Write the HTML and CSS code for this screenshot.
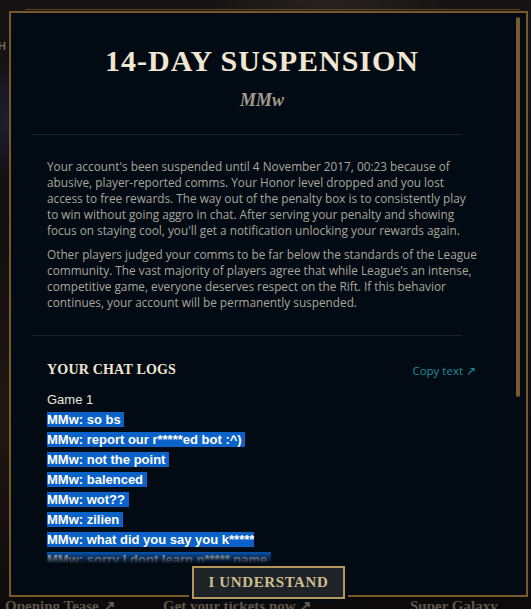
FILE: index.html
```html
<!DOCTYPE html>
<html lang="en">
<head>
<meta charset="utf-8">
<title>14-Day Suspension</title>
<link rel="stylesheet" href="styles.css">
</head>
<body>
  <div class="client">
    <div class="client-top">
      <span class="client-tab">H</span>
    </div>
    <nav class="client-links">
      <a class="client-link">Opening Tease ↗</a>
      <a class="client-link">Get your tickets now ↗</a>
      <a class="client-link">Super Galaxy</a>
    </nav>
  </div>

  <div class="modal" role="dialog" aria-labelledby="modal-title">
    <div class="modal-body">
      <header class="modal-header">
        <h1 id="modal-title" class="modal-title">14-DAY SUSPENSION</h1>
        <p class="modal-name">MMw</p>
      </header>

      <hr class="divider">

      <section class="notice">
        <p>Your account's been suspended until 4 November 2017, 00:23 because of abusive, player-reported comms. Your Honor level dropped and you lost access to free rewards. The way out of the penalty box is to consistently play to win without going aggro in chat. After serving your penalty and showing focus on staying cool, you'll get a notification unlocking your rewards again.</p>
        <p>Other players judged your comms to be far below the standards of the League community. The vast majority of players agree that while League’s an intense, competitive game, everyone deserves respect on the Rift. If this behavior continues, your account will be permanently suspended.</p>
      </section>

      <hr class="divider">

      <section class="chat">
        <div class="chat-head">
          <h2 class="chat-title">YOUR CHAT LOGS</h2>
          <a class="copy-link">Copy text ↗</a>
        </div>
        <div class="chat-game">Game 1</div>
        <ul class="chat-log">
          <li><span class="chat-line">MMw: so bs </span></li>
          <li><span class="chat-line">MMw: report our r*****ed bot :^) </span></li>
          <li><span class="chat-line">MMw: not the point </span></li>
          <li><span class="chat-line">MMw: balenced </span></li>
          <li><span class="chat-line">MMw: wot?? </span></li>
          <li><span class="chat-line">MMw: zilien </span></li>
          <li><span class="chat-line">MMw: what did you say you k*****</span></li>
          <li><span class="chat-line">MMw: sorry I dont learn n***** name </span></li>
        </ul>
      </section>
    </div>

    <div class="scrollbar"><div class="scrollbar-thumb"></div></div>

    <footer class="modal-actions">
      <button class="btn-primary" type="button">I UNDERSTAND</button>
    </footer>
  </div>
</body>
</html>
```

FILE: styles.css
```css
* {
  box-sizing: border-box;
}

html,
body {
  margin: 0;
  height: 100%;
}

body {
  width: 531px;
  height: 609px;
  overflow: hidden;
  position: relative;
  background: #0e0c0d;
  font-family: "Liberation Sans", Arial, sans-serif;
}

/* client shell behind the dialog */
.client {
  height: 100%;
  display: flex;
  flex-direction: column;
  justify-content: space-between;
  background:
    radial-gradient(ellipse 90px 60px at 20px 120px, rgba(40, 50, 90, 0.45), transparent),
    radial-gradient(ellipse 120px 40px at 330px 0px, rgba(70, 64, 58, 0.35), transparent),
    radial-gradient(ellipse 80px 200px at 0px 420px, rgba(60, 44, 30, 0.35), transparent),
    linear-gradient(#171314, #0c0a0b);
}

.client-top {
  padding: 36px 0 0 0;
  height: 60px;
}

.client-tab {
  display: inline-block;
  font-family: "Liberation Sans", sans-serif;
  font-weight: bold;
  font-size: 11px;
  color: #6f6a63;
  margin-left: -2px;
}

.client-links {
  display: flex;
  height: 12px;
  font-family: "Liberation Serif", serif;
  font-weight: bold;
  font-size: 15px;
  line-height: 18px;
  color: #5f584d;
  white-space: nowrap;
}

.client-link:nth-child(1) { margin-left: 5px; width: 158px; }
.client-link:nth-child(2) { width: 247px; }

/* dialog frame */
.modal {
  position: absolute;
  left: 9px;
  top: 11px;
  width: 519px;
  height: 586px;
  border: 2px solid #785a28;
  background: #020a13;
}

.modal::before {
  content: "";
  position: absolute;
  left: 14px;
  right: 6px;
  top: -4px;
  height: 1px;
  background: #5b4522;
}

.modal-body {
  height: 552px;
  overflow: hidden;
  padding: 30px 49px 0 36px;
  position: relative;
}

.modal-body::after {
  content: "";
  position: absolute;
  left: 0;
  right: 0;
  bottom: 0;
  height: 14px;
  background: linear-gradient(rgba(2, 10, 19, 0.1), #020a13 90%);
}

.modal-header {
  text-align: center;
}

.modal-title {
  margin: 0;
  font-family: "Liberation Serif", serif;
  font-weight: bold;
  font-size: 30px;
  line-height: 36px;
  letter-spacing: 1px;
  color: #f0e6d2;
}

.modal-name {
  margin: 9px 0 0;
  font-family: "Liberation Serif", serif;
  font-style: italic;
  font-weight: bold;
  font-size: 18px;
  line-height: 24px;
  color: #a09b8c;
}

.divider {
  border: 0;
  height: 1px;
  background: #1b2329;
  margin: 22px 15px 0 -15px;
}

.notice {
  padding-top: 23px;
  padding-bottom: 25px;
}

.notice p {
  margin: 0;
  font-family: "Open Sans", sans-serif;
  font-size: 11.8px;
  line-height: 16px;
  color: #aaa69b;
}

.notice p + p {
  margin-top: 8px;
}

.notice + .divider {
  margin-top: 0;
}

.chat {
  padding-top: 24px;
}

.chat-head {
  display: flex;
  justify-content: space-between;
  align-items: center;
  height: 20px;
}

.chat-title {
  margin: 0;
  font-family: "Liberation Serif", serif;
  font-weight: bold;
  font-size: 14px;
  letter-spacing: 0.2px;
  color: #f0e6d2;
}

.copy-link {
  font-family: "Open Sans", sans-serif;
  font-size: 11.5px;
  color: #17919c;
  margin-right: 1px;
}

.chat-game {
  margin-top: 10px;
  font-size: 13px;
  line-height: 20px;
  color: #eae6df;
}

.chat-log {
  list-style: none;
  margin: 0;
  padding: 0;
}

.chat-log li {
  font-size: 13px;
  font-weight: bold;
  line-height: 20px;
  white-space: pre;
}

.chat-line {
  background: #0b62c9;
  color: #ffffff;
}

/* custom scroll track */
.scrollbar {
  position: absolute;
  top: 4px;
  right: 6px;
  width: 4px;
  height: 380px;
}

.scrollbar-thumb {
  height: 100%;
  border-radius: 2px;
  background: #7a5c2c;
}

.modal-actions {
  position: absolute;
  left: 0;
  right: 0;
  bottom: -4px;
  display: flex;
  justify-content: center;
}

.btn-primary {
  width: 153px;
  height: 33px;
  border: 2px solid #b5975d;
  background: #1e2328;
  color: #cdbe91;
  font-family: "Liberation Serif", serif;
  font-weight: bold;
  font-size: 15px;
  letter-spacing: 0.6px;
  padding: 0;
  outline: 3px solid #020a13;
}
```
